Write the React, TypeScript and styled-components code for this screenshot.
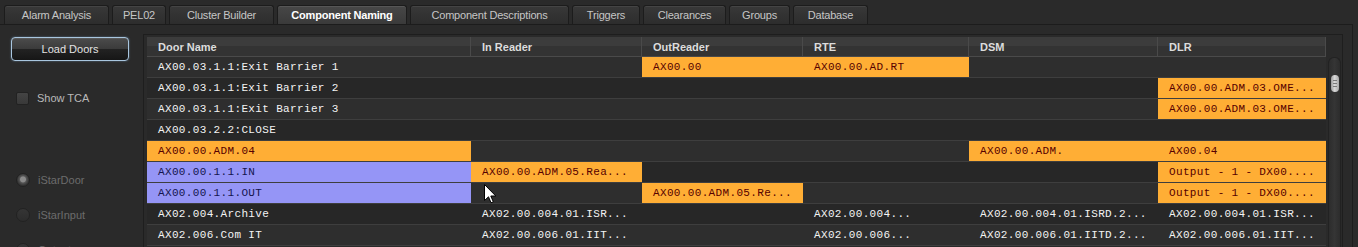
import React from 'react';
import styled, { createGlobalStyle } from 'styled-components';

const Global = createGlobalStyle`
  html, body { margin: 0; padding: 0; background: #2a2a2a; }
  body { font-family: "Liberation Sans", Arial, sans-serif; }
`;

const Page = styled.div`
  position: relative;
  width: 1358px;
  height: 247px;
  overflow: hidden;
  background: #2a2a2a;
`;

const TabBar = styled.div`
  display: flex;
  align-items: flex-end;
  gap: 3px;
  height: 24px;
  padding-left: 4px;
  box-sizing: border-box;
`;

const Tab = styled.div<{ $w: number; $active?: boolean }>`
  width: ${p => p.$w}px;
  height: 19px;
  box-sizing: border-box;
  display: flex;
  align-items: center;
  justify-content: center;
  font-size: 11px;
  letter-spacing: -0.2px;
  font-weight: ${p => (p.$active ? 700 : 400)};
  color: ${p => (p.$active ? '#ffffff' : '#c6c6c6')};
  border: 1px solid #1c1c1c;
  border-bottom: none;
  border-radius: 3px 3px 0 0;
  background: ${p =>
    p.$active
      ? 'linear-gradient(#474747, #3a3a3a)'
      : 'linear-gradient(#383838, #2d2d2d)'};
  box-shadow: inset 0 1px 0 ${p => (p.$active ? '#565656' : '#444')};
`;

const ContentPanel = styled.div`
  display: flex;
  width: 1353px;
  height: 223px;
  box-sizing: border-box;
  border-top: 1px solid #1c1c1c;
  border-right: 1px solid #1c1c1c;
  background: #2a2a2a;
`;

const LeftPanel = styled.div`
  width: 143px;
  flex: none;
  display: flex;
  flex-direction: column;
  align-items: flex-start;
  padding-left: 11px;
  box-sizing: border-box;
  & > * { flex: none; }
`;

const LoadButton = styled.button`
  margin-top: 12px;
  width: 118px;
  height: 24px;
  box-sizing: border-box;
  border: 1px solid #a9c6df;
  border-radius: 4px;
  box-shadow: 0 0 2px #5d7890, inset 0 1px 0 #5a5a5a;
  background: linear-gradient(#4c4c4c 0%, #3b3b3b 48%, #222 52%, #161616 100%);
  color: #e2e2e2;
  font-family: "Liberation Sans", Arial, sans-serif;
  font-size: 11px;
  padding: 0;
`;

const OptionRow = styled.div<{ $top: number; $dim?: boolean }>`
  margin-top: ${p => p.$top}px;
  padding-left: 5px;
  display: flex;
  align-items: center;
  gap: 8px;
  height: 14px;
  font-size: 11px;
  color: ${p => (p.$dim ? '#6c6c6c' : '#b9b9b9')};
`;

const CheckBox = styled.span`
  width: 13px;
  height: 13px;
  box-sizing: border-box;
  border: 1px solid #222;
  border-radius: 2px;
  background: linear-gradient(#444, #393939);
`;

const Radio = styled.span<{ $on?: boolean }>`
  width: 14px;
  height: 14px;
  box-sizing: border-box;
  border-radius: 50%;
  border: 1px solid #222;
  background: ${p =>
    p.$on
      ? 'radial-gradient(circle at 50% 45%, #8a8a8a 0 2.5px, #555 3.5px, #333 6px)'
      : 'linear-gradient(#353535, #2c2c2c)'};
`;

const GridFrame = styled.div`
  margin-top: 9px;
  width: 1200px;
  height: 214px;
  box-sizing: border-box;
  display: flex;
  border: 1px solid #1e1e1e;
  border-bottom: none;
  padding: 2px 1px 0 3px;
`;

const Table = styled.div`
  width: 1179px;
  display: grid;
  grid-template-columns: 324px 171px 161px 166px 189px 168px;
  grid-auto-rows: min-content;
  align-content: start;
`;

const HeadCell = styled.div<{ $last?: boolean }>`
  height: 20px;
  box-sizing: border-box;
  display: flex;
  align-items: center;
  padding-left: 11px;
  font-size: 11px;
  font-weight: 700;
  color: #dcdcdc;
  background: linear-gradient(#3c3c3c 0 50%, #333 50% 100%);
  border-bottom: 1px solid #4a4a4a;
  border-right: ${p => (p.$last ? '1px solid #4a4a4a' : '0')};
  &:not(:first-child) { border-left: 1px solid #4a4a4a; margin-left: -1px; }
`;

type Tone = 'o' | 'p' | undefined;

const Cell = styled.div<{ $tone: Tone; $odd: boolean }>`
  height: 21px;
  box-sizing: border-box;
  display: flex;
  align-items: center;
  padding-left: 11px;
  white-space: pre;
  overflow: hidden;
  font-family: "Liberation Mono", "Courier New", monospace;
  font-size: 11px;
  letter-spacing: 0.35px;
  border-bottom: 1px solid #3e3e3e;
  background: ${p =>
    p.$tone === 'o' ? '#ffae35' : p.$tone === 'p' ? '#9595f6' : p.$odd ? '#2e2e2e' : '#272727'};
  color: ${p =>
    p.$tone === 'o' ? '#560000' : p.$tone === 'p' ? '#14144e' : '#f4f4f4'};
`;

const ScrollTrack = styled.div`
  margin: 20px 0 0 2px;
  width: 13px;
  height: 192px;
  box-sizing: border-box;
  border: 1px solid #222;
  border-bottom: none;
  border-radius: 6px 6px 0 0;
  background: linear-gradient(90deg, #2c2c2c, #353535 50%, #2c2c2c);
  display: flex;
  justify-content: center;
`;

const ScrollThumb = styled.div`
  margin-top: 17px;
  width: 8px;
  height: 17px;
  border-radius: 4px;
  background: linear-gradient(90deg, #9c9c9c, #d9d9d9 45%, #a8a8a8);
  display: flex;
  flex-direction: column;
  align-items: center;
  justify-content: center;
  gap: 2px;
`;

const Grip = styled.span`
  width: 4px;
  height: 1px;
  background: #7a7a7a;
`;

const Cursor = styled.svg`
  position: absolute;
  left: 484px;
  top: 184px;
`;

const tabs: [string, number][] = [
  ['Alarm Analysis', 105],
  ['PEL02', 54],
  ['Cluster Builder', 105],
  ['Component Naming', 130],
  ['Component Descriptions', 159],
  ['Triggers', 68],
  ['Clearances', 83],
  ['Groups', 61],
  ['Database', 75],
];

const columns = ['Door Name', 'In Reader', 'OutReader', 'RTE', 'DSM', 'DLR'];

type C = string | [Tone, string];
const o = (t: string): C => ['o', t];
const p = (t: string): C => ['p', t];

const rows: C[][] = [
  ['AX00.03.1.1:Exit Barrier 1', '', o('AX00.00'), o('AX00.00.AD.RT'), '', ''],
  ['AX00.03.1.1:Exit Barrier 2', '', '', '', '', o('AX00.00.ADM.03.OME...')],
  ['AX00.03.1.1:Exit Barrier 3', '', '', '', '', o('AX00.00.ADM.03.OME...')],
  ['AX00.03.2.2:CLOSE', '', '', '', '', ''],
  [o('AX00.00.ADM.04'), '', '', '', o('AX00.00.ADM.'), o('AX00.04')],
  [p('AX00.00.1.1.IN'), o('AX00.00.ADM.05.Rea...'), '', '', '', o('Output - 1 - DX00....')],
  [p('AX00.00.1.1.OUT'), '', o('AX00.00.ADM.05.Re...'), '', '', o('Output - 1 - DX00....')],
  ['AX02.004.Archive', 'AX02.00.004.01.ISR...', '', 'AX02.00.004...', 'AX02.00.004.01.ISRD.2...', 'AX02.00.004.01.ISR...'],
  ['AX02.006.Com IT', 'AX02.00.006.01.IIT...', '', 'AX02.00.006...', 'AX02.00.006.01.IITD.2...', 'AX02.00.006.01.IIT...'],
];

export default function App() {
  return (
    <Page>
      <Global />
      <TabBar>
        {tabs.map(([t, w]) => (
          <Tab key={t} $w={w} $active={t === 'Component Naming'}>
            {t}
          </Tab>
        ))}
      </TabBar>
      <ContentPanel>
        <LeftPanel>
          <LoadButton>Load Doors</LoadButton>
          <OptionRow $top={30}>
            <CheckBox />
            Show TCA
          </OptionRow>
          <OptionRow $top={68} $dim>
            <Radio $on />
            iStarDoor
          </OptionRow>
          <OptionRow $top={21} $dim>
            <Radio />
            iStarInput
          </OptionRow>
          <OptionRow $top={21} $dim>
            <Radio />
            Output
          </OptionRow>
        </LeftPanel>
        <GridFrame>
          <Table>
            {columns.map((c, i) => (
              <HeadCell key={c} $last={i === columns.length - 1}>
                {c}
              </HeadCell>
            ))}
            {rows.map((r, ri) =>
              r.map((c, ci) => {
                const tone: Tone = typeof c === 'string' ? undefined : c[0];
                const text = typeof c === 'string' ? c : c[1];
                return (
                  <Cell key={`${ri}-${ci}`} $tone={tone} $odd={ri % 2 === 0}>
                    {text}
                  </Cell>
                );
              })
            )}
          </Table>
          <ScrollTrack>
            <ScrollThumb>
              <Grip />
              <Grip />
              <Grip />
            </ScrollThumb>
          </ScrollTrack>
        </GridFrame>
      </ContentPanel>
      <Cursor width="13" height="20" viewBox="0 0 13 20">
        <path
          d="M0.5 0.5 L0.5 16.5 L4.5 12.8 L7 18.8 L9.3 17.8 L6.8 12 L11.8 12 Z"
          fill="#fff"
          stroke="#000"
          strokeWidth="1"
        />
      </Cursor>
    </Page>
  );
}
